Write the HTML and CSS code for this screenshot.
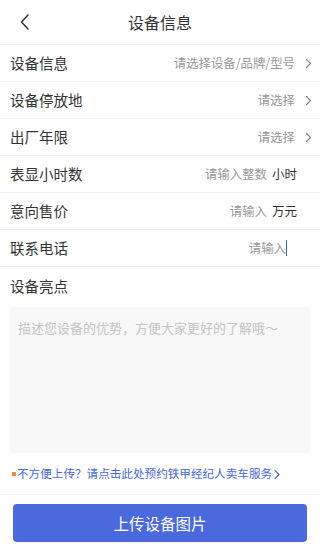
FILE: index.html
```html
<!DOCTYPE html>
<html lang="zh">
<head>
<meta charset="utf-8">
<link rel="stylesheet" href="styles.css">
</head>
<body>
<div class="page">
  <header class="nav">
    <span class="back"><svg width="12" height="18" viewBox="0 0 12 18"><path d="M9 2 L2.5 9 L9 16" fill="none" stroke="#333" stroke-width="1.5" stroke-linecap="round" stroke-linejoin="round"/></svg></span>
    <h1 class="title">设备信息</h1>
  </header>
  <div class="row"><span class="label">设备信息</span><span class="val"><span class="ph">请选择设备/品牌/型号</span><svg class="chev" width="7" height="11" viewBox="0 0 7 11"><path d="M1.5 1.5 L5.5 5.5 L1.5 9.5" fill="none" stroke="#888" stroke-width="1.2" stroke-linecap="round" stroke-linejoin="round"/></svg></span></div>
  <div class="row"><span class="label">设备停放地</span><span class="val"><span class="ph">请选择</span><svg class="chev" width="7" height="11" viewBox="0 0 7 11"><path d="M1.5 1.5 L5.5 5.5 L1.5 9.5" fill="none" stroke="#888" stroke-width="1.2" stroke-linecap="round" stroke-linejoin="round"/></svg></span></div>
  <div class="row"><span class="label">出厂年限</span><span class="val"><span class="ph">请选择</span><svg class="chev" width="7" height="11" viewBox="0 0 7 11"><path d="M1.5 1.5 L5.5 5.5 L1.5 9.5" fill="none" stroke="#888" stroke-width="1.2" stroke-linecap="round" stroke-linejoin="round"/></svg></span></div>
  <div class="row"><span class="label">表显小时数</span><span class="val"><span class="ph">请输入整数</span><span class="unit">小时</span></span></div>
  <div class="row"><span class="label">意向售价</span><span class="val"><span class="ph">请输入</span><span class="unit">万元</span></span></div>
  <div class="row"><span class="label">联系电话</span><span class="val"><span class="ph">请输入</span><span class="caret"></span></span></div>
  <div class="row last"><span class="label">设备亮点</span></div>
  <div class="area"><span class="area-ph">描述您设备的优势，方便大家更好的了解哦～</span></div>
  <div class="tip"><span class="dot"></span>不方便上传？请点击此处预约铁甲经纪人卖车服务<svg class="tip-chev" width="8" height="11" viewBox="0 0 8 11"><path d="M2 1.5 L6 5.5 L2 9.5" fill="none" stroke="#4668d6" stroke-width="1.2" stroke-linecap="round" stroke-linejoin="round"/></svg></div>
  <div class="foot"><button class="btn">上传设备图片</button></div>
</div>
</body>
</html>
```
FILE: styles.css
```css
* { box-sizing: border-box; }
html, body { margin: 0; padding: 0; background: #fff; }
body { font-family: "Noto Sans CJK SC", "Noto Sans", sans-serif; color: #333; width: 320px; height: 548px; overflow: hidden; }
.page { display: flex; flex-direction: column; }
.nav { height: 45px; display: flex; align-items: center; justify-content: center; position: relative; border-bottom: 1px solid #f0f0f0; }
.back { position: absolute; left: 19px; top: 13px; display: flex; }
.title { margin: 0; font-size: 16px; font-weight: 400; color: #333; line-height: 1; }
.row { height: 37px; display: flex; align-items: center; justify-content: space-between; padding: 0 8px 0 10px; border-bottom: 1px solid #f0f0f0; }
.row.last { border-bottom: none; height: 38px; }
.label { font-size: 14.5px; color: #333; line-height: 1; }
.val { display: flex; align-items: center; }
.ph { font-size: 12.4px; color: #999; line-height: 1; }
.chev { margin-left: 10px; }
.unit { font-size: 12.5px; color: #333; margin-left: 5px; margin-right: 15px; line-height: 1; }
.caret { width: 1px; height: 16px; background: #3a5fd6; margin-right: 25px; }
.area { margin: 2px 10px 0 10px; height: 146px; background: #f8f8f8; border-radius: 2px; padding: 7px 8px; }
.area-ph { font-size: 13px; color: #c4c4c4; line-height: 1.2; }
.tip { display: flex; align-items: center; padding: 0 0 0 12px; margin-top: 13px; height: 16px; font-size: 11.6px; color: #4668d6; line-height: 1; }
.dot { width: 4px; height: 4px; background: #f08a4b; margin-right: 1px; }
.tip-chev { margin-left: 1px; }
.foot { margin-top: 12px; border-top: 1px solid #f6f6f6; padding: 9px 13px 0 13px; }
.btn { width: 100%; height: 38px; background: #4a69dc; border: none; border-radius: 4px; color: #fff; font-family: "Noto Sans CJK SC", sans-serif; font-size: 15.5px; }
```
